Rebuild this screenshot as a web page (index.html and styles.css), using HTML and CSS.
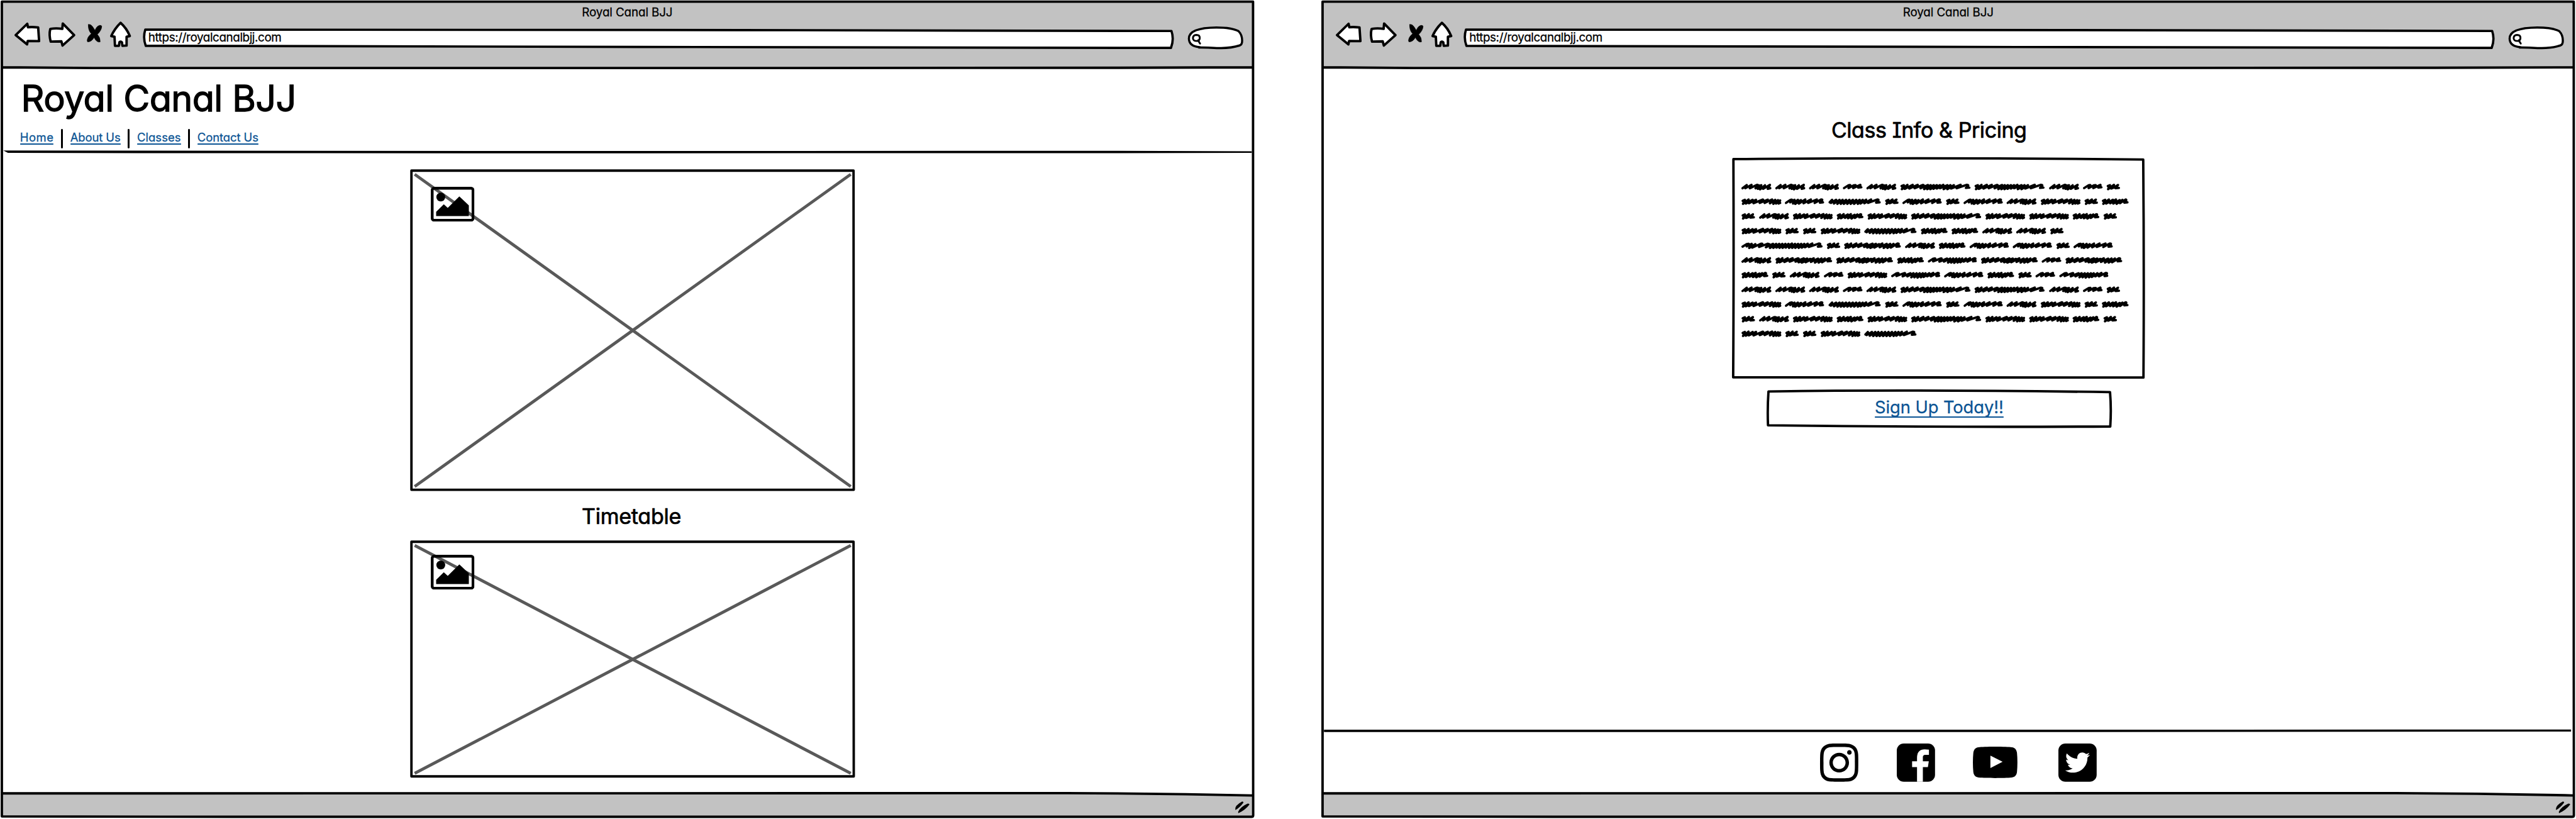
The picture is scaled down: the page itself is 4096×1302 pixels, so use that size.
FILE: index.html
```html
<!DOCTYPE html>
<html lang="en">
<head>
<meta charset="utf-8">
<title>Royal Canal BJJ</title>
<link rel="stylesheet" href="styles.css">
</head>
<body>
<svg class="defs" aria-hidden="true">
  <defs>
    <g id="frame">
      <path class="bar" d="M4 3.5H2700V145L2400 146 200 146.5 4 145ZM4 1709L2300 1708.5Q2500 1709 2700 1713.5V1759H4Z"/>
      <path class="ink" d="M4 3.5H2699.7L2699.7 1400 2700 1756Q2700 1759.5 2696 1759.5H500L4 1758.5 4 1500 4.2 800ZM4 145L200 146.5H1600L2400 146 2700 145M4 1709L2300 1708.5Q2500 1709 2700 1713.5"/>
      <path d="M2661.5 1744Q2660 1735 2676 1726.5Q2679 1726 2679 1729Q2671 1740 2661.5 1745ZM2667.5 1749Q2672 1738 2688 1731Q2692 1731 2692 1733Q2682 1746 2668 1751.5Z"/>
    </g>
    <g id="tools" class="tool">
      <path d="M34 75L59 50.5 60.5 58Q71 57 82.5 58.5L84.5 88 60 87.5 58.5 95Z"/>
      <path d="M109.5 61.5Q121 59.5 134.5 61.5L135.5 50 160 75 135 97.5 132.5 88.5 109.5 89Q105.500 74 108.500 62Z"/>
      <path class="solid" d="M190.500 52Q196 51 200 57L205 65Q208 56 215 54 219 53.500 219.500 56 219 65 210 73.500 217 81 216 89.500 209 92 203 80 197 90 189 89.500 187 87 189.500 81 192 76 197 72 190 65 190.500 52Z"/>
      <path d="M260 48.500Q273 60 280 77L273 78.500 273 97.500 264 98 263 90.500Q259.500 88 257.500 90.500L256.500 98 248 98 247 78.500 240 77Q247 61 260 48.500Z"/>
    </g>
    <symbol id="photo" viewBox="0 0 94 75">
      <rect class="photo-edge" x="3" y="3" width="88" height="69" rx="4"/>
      <circle cx="21.500" cy="22" r="9.500"/>
      <path d="M11.500 54L28 37.500 36.500 45.500 61.500 20.500 82 40V63H11.500Z"/>
    </symbol>
    <path id="a" d="M7 62L34 41 25 62 65 40 54 62 98 41Q110 38 104 46L91 62Q100 54 116 44L106 66 128 42 120 69 152 43 140 66 184 40 170 66 186 62"/>
    <path id="b" d="M7 61L36 43Q52 38 46 46L36 61 70 43 82 42 66 61 112 40Q116 44 106 52L98 58 119 56"/>
    <path id="c" d="M8 48L22 42 10 68 46 40 28 66 80 40 58 64 112 40 92 62 146 41Q156 40 144 52L130 62 178 41 154 68 196 42 174 68 216 42 194 68 236 42 214 66 256 42 236 64 278 40 256 62 304 42 280 68 324 42 304 68 346 42 328 64 390 40 364 62 430 40Q446 40 434 52L424 60 446 58"/>
    <path id="d" d="M8 48L22 42 10 68 48 40 30 64 50 56 74 41 58 62 80 60"/>
    <path id="e" d="M8 48L22 42 10 68 46 40 28 66 72 42 48 64 94 42 78 64 138 40Q144 42 134 50L118 62 170 41 150 62 198 40 184 64 218 42 206 68 236 44 224 66 250 46 240 66 250 62"/>
    <path id="f" d="M7 62L34 43Q50 38 46 46L34 58 62 42 52 66 84 42 66 68 104 44 90 66 132 40 120 64 168 40 150 62 206 40 192 62 234 40Q248 40 236 50L226 60 246 58"/>
    <path id="g" d="M8 58L24 42 16 62 50 42 36 66 72 42 58 68 92 42 80 68 114 42 100 68 136 42 122 68 158 42 144 68 180 42 166 68 202 42 190 68 222 42 208 66 244 41 232 64 276 40 256 62 316 40Q330 40 320 50L308 60 331 58"/>
    <path id="h" d="M8 48L22 42 10 68 46 40 28 66 72 42 54 64 92 40 74 66 116 44 96 68 134 42 118 64 154 40Q164 40 152 54L146 60 166 58"/>
    <path id="i" d="M8 48L22 42 10 68 46 40 28 66 80 40 58 64 112 40 92 62 146 41Q156 40 144 52L130 62 184 41 150 66 206 42 170 68 226 44 196 66 248 40 230 64 276 42 256 68 298 42 280 68 320 42 302 66 346 40Q360 40 348 52L338 60 360 58"/>
    <path id="j" d="M7 60L34 43Q52 38 46 46L34 60 82 42Q94 38 86 48L74 62 124 42 104 62 144 42 130 68 164 42 150 68 184 42 170 70 204 42 192 68 222 42 210 66 246 42 232 62 272 40 256 62 300 40Q314 40 302 52L292 60 309 58"/>
    <path id="k" d="M7 60L34 43Q52 38 46 46L34 58 66 42 50 68 90 44 70 66 126 41Q140 38 132 48L114 62 170 41 180 44 158 64 204 42 184 68 224 42 206 68 244 42 226 66 264 42 246 68 284 42 266 68 304 42 286 66 326 40 308 68 346 42 328 68 366 42 348 68 386 42 370 68 406 42 390 66 428 41 410 64 458 40 436 62 500 40Q516 40 504 52L494 60 517 58"/>
    <g id="line1"><use href="#a"/><use href="#a" x="219"/><use href="#a" x="437"/><use href="#b" x="656"/><use href="#a" x="808"/><use href="#c" x="1027"/><use href="#c" x="1506"/><use href="#a" x="1989"/><use href="#b" x="2208"/><use href="#d" x="2360"/></g>
    <g id="line2"><use href="#e"/><use href="#f" x="281"/><use href="#g" x="562"/><use href="#d" x="928"/><use href="#f" x="1041"/><use href="#d" x="1322"/><use href="#f" x="1436"/><use href="#a" x="1714"/><use href="#e" x="1934"/><use href="#d" x="2217"/><use href="#h" x="2329"/></g>
    <g id="line3"><use href="#d"/><use href="#a" x="114"/><use href="#e" x="332"/><use href="#h" x="615"/><use href="#e" x="814"/><use href="#c" x="1096"/><use href="#e" x="1576"/><use href="#e" x="1859"/><use href="#h" x="2140"/><use href="#d" x="2340"/></g>
    <g id="line4"><use href="#e"/><use href="#d" x="283"/><use href="#d" x="397"/><use href="#e" x="511"/><use href="#g" x="793"/></g>
  </defs>
</svg>

<section class="window">
  <svg class="frame" viewBox="0 0 2703 1764" aria-hidden="true"><use href="#frame"/></svg>
  <header class="chrome">
    <div class="caption"><span class="t-caption">Royal Canal BJJ</span></div>
    <div class="toolbar">
      <svg class="tools" viewBox="26 40 270 66" aria-hidden="true"><use href="#tools"/></svg>
      <div class="address">
        <svg class="outline" viewBox="306 58 2226 50" aria-hidden="true"><path class="field" d="M312.500 63.500L1600 64.500 2524 66.500Q2530 84 2523 103L1500 101 313.500 98.500Q307 81 312.500 63.500Z"/></svg>
        <span class="t-url">https://royalcanalbjj.com</span>
      </div>
      <svg class="search" viewBox="612 168 364 156" aria-hidden="true"><path class="pill" d="M690 306C650 302 622 285 622 250C622 205 680 180 800 179C870 179 920 190 943 203C960 220 966 245 966 265C966 285 958 293 950 295C910 308 870 312 830 312C780 312 740 307 690 308Z"/><path class="lens" d="M670 227C657 228 648 236 648 248C648 260 658 266 670 266C684 266 692 258 692 246C692 234 684 227 670 227ZM681 262L694 283"/></svg>
    </div>
  </header>
  <div class="masthead">
    <h1><span class="t-h1">Royal Canal BJJ</span></h1>
    <nav class="nav">
      <a class="link t-home">Home</a><i class="rule"></i><a class="link t-about">About Us</a><i class="rule"></i><a class="link t-classes">Classes</a><i class="rule"></i><a class="link t-contact">Contact Us</a>
    </nav>
    <svg class="divider" viewBox="0 0 2703 8" aria-hidden="true"><path d="M4 .5L1400 1.500 2400 1 2700 2.200V5.500L2400 6 1000 6.500 300 6 14 5.500Z"/></svg>
  </div>
  <main class="gallery">
    <div class="picture picture-tall">
      <svg class="outline" viewBox="0 0 959 694" aria-hidden="true"><path class="cross" d="M10 11L949.500 683.500M949.500 11L10 683.500"/><path class="ink" d="M3 3L955.500 3 956 690.500H3Z"/></svg>
      <svg class="photo" aria-hidden="true"><use href="#photo"/></svg>
    </div>
    <h2><span class="t-time">Timetable</span></h2>
    <div class="picture picture-short">
      <svg class="outline" viewBox="0 0 959 512" aria-hidden="true"><path class="cross" d="M10 11L949.500 502M949.500 11L10 502"/><path class="ink" d="M3 3L955.500 3 956 508.500H3Z"/></svg>
      <svg class="photo" aria-hidden="true"><use href="#photo"/></svg>
    </div>
  </main>
</section>

<section class="window">
  <svg class="frame" viewBox="0 0 2703 1764" aria-hidden="true"><use href="#frame"/></svg>
  <header class="chrome">
    <div class="caption"><span class="t-caption">Royal Canal BJJ</span></div>
    <div class="toolbar">
      <svg class="tools" viewBox="26 40 270 66" aria-hidden="true"><use href="#tools"/></svg>
      <div class="address">
        <svg class="outline" viewBox="306 58 2226 50" aria-hidden="true"><path class="field" d="M312.500 63.500L1600 64.500 2524 66.500Q2530 84 2523 103L1500 101 313.500 98.500Q307 81 312.500 63.500Z"/></svg>
        <span class="t-url">https://royalcanalbjj.com</span>
      </div>
      <svg class="search" viewBox="612 168 364 156" aria-hidden="true"><path class="pill" d="M690 306C650 302 622 285 622 250C622 205 680 180 800 179C870 179 920 190 943 203C960 220 966 245 966 265C966 285 958 293 950 295C910 308 870 312 830 312C780 312 740 307 690 308Z"/><path class="lens" d="M670 227C657 228 648 236 648 248C648 260 658 266 670 266C684 266 692 258 692 246C692 234 684 227 670 227ZM681 262L694 283"/></svg>
    </div>
  </header>
  <main class="pricing">
    <h2 class="pricing-title"><span class="t-class">Class <b class="serif-i">I</b>nfo &amp; Pricing</span></h2>
    <div class="copy">
      <svg class="outline" viewBox="0 0 890 479" aria-hidden="true"><path class="ink" d="M3 4Q450 0 886 5Q888 240 886.500 474.500Q450 476 2.500 474Q4 240 3 4Z"/></svg>
      <svg class="scribble" viewBox="0 0 2510 1030" aria-hidden="true">
        <use href="#line1"/><use href="#line2" y="94.900"/><use href="#line3" y="189.800"/>
        <g transform="translate(0 284.700)"><use href="#line4"/><use href="#h" x="1159"/><use href="#h" x="1357"/><use href="#a" x="1557"/><use href="#a" x="1776"/><use href="#d" x="1995"/></g>
        <g transform="translate(0 379.600)"><use href="#k"/><use href="#d" x="551"/><use href="#i" x="663"/><use href="#a" x="1058"/><use href="#h" x="1275"/><use href="#f" x="1475"/><use href="#f" x="1754"/><use href="#d" x="2035"/><use href="#f" x="2147"/></g>
        <g transform="translate(0 474.500)"><use href="#a"/><use href="#i" x="219"/><use href="#i" x="612"/><use href="#h" x="1006"/><use href="#j" x="1205"/><use href="#i" x="1548"/><use href="#b" x="1941"/><use href="#i" x="2094"/></g>
        <g transform="translate(0 569.400)"><use href="#h"/><use href="#d" x="198"/><use href="#a" x="312"/><use href="#b" x="533"/><use href="#e" x="685"/><use href="#j" x="968"/><use href="#f" x="1310"/><use href="#h" x="1589"/><use href="#d" x="1789"/><use href="#b" x="1901"/><use href="#j" x="2055"/></g>
        <use href="#line1" y="664.300"/><use href="#line2" y="759.200"/><use href="#line3" y="854.100"/><use href="#line4" y="949"/>
      </svg>
    </div>
    <div class="signup">
      <svg class="outline" viewBox="0 0 744 84" aria-hidden="true"><path class="ink" d="M4 4.500Q330 0 740 6Q743 42 740.500 80Q370 82 3 77.500Q1.500 42 4 4.500Z"/></svg>
      <a class="link link-big">Sign Up Today!!</a>
    </div>
  </main>
  <footer class="social">
    <svg class="social-rule" viewBox="0 0 2703 8" aria-hidden="true"><path d="M4 1.500H1400L2697 1V5.500L1500 6.500H4Z"/></svg>
    <div class="icons">
      <svg class="icon" viewBox="0 32 448 448" aria-label="Instagram"><path d="M224.100 141c-63.600 0-114.900 51.300-114.900 114.900s51.300 114.900 114.900 114.900S339 319.500 339 255.900 287.700 141 224.100 141zm0 189.600c-41.100 0-74.700-33.500-74.700-74.700s33.500-74.700 74.700-74.700 74.700 33.500 74.700 74.700-33.600 74.700-74.700 74.700zm146.400-194.300c0 14.900-12 26.800-26.800 26.800-14.900 0-26.800-12-26.800-26.800s12-26.800 26.800-26.800 26.800 12 26.800 26.800zm76.100 27.200c-1.700-35.900-9.900-67.700-36.200-93.900-26.200-26.200-58-34.400-93.900-36.200-37-2.100-147.900-2.100-184.900 0-35.800 1.700-67.600 9.900-93.900 36.100s-34.400 58-36.200 93.900c-2.100 37-2.100 147.900 0 184.900 1.700 35.900 9.900 67.700 36.200 93.900s58 34.400 93.900 36.200c37 2.100 147.900 2.100 184.900 0 35.900-1.700 67.700-9.900 93.900-36.200 26.200-26.200 34.400-58 36.200-93.900 2.100-37 2.100-147.800 0-184.800zM398.800 388c-7.800 19.600-22.900 34.700-42.600 42.600-29.500 11.700-99.500 9-132.100 9s-102.700 2.600-132.100-9c-19.600-7.800-34.700-22.900-42.600-42.600-11.700-29.500-9-99.500-9-132.100s-2.600-102.700 9-132.100c7.800-19.600 22.900-34.700 42.600-42.600 29.500-11.700 99.500-9 132.100-9s102.700-2.600 132.100 9c19.600 7.800 34.700 22.900 42.600 42.600 11.700 29.500 9 99.500 9 132.100s2.700 102.700-9 132.100z"/></svg>
      <svg class="icon" viewBox="0 0 82.400 82.400" aria-label="Facebook"><rect width="82.400" height="82.400" rx="15"/><path class="cut" d="M43.600 82.400V50.700H33V38.300H43.600V31C43.600 18 50 12.700 60 12.700Q65 12.700 69.300 13.300V24.500H62.500C57 24.500 56.200 27 56.200 30V38.300H69L67 50.700H56.200V82.400Z"/></svg>
      <svg class="icon icon-wide" viewBox="0 0 96 67.700" aria-label="YouTube"><path d="M48 0C65 0 78 .5 84 1.200 91 2 94 6.500 95 13 96.300 26 96.300 42 95 55 94 61.500 91 65.500 84 66.500 66 68.100 30 68.100 12 66.500 5 65.500 2 61.500 1 55-.3 42-.3 26 1 13 2 6.500 5 2 12 1.200 18 .5 31 0 48 0Z"/><path class="cut" d="M37.800 19.300L64 32.600 37.800 46Z"/></svg>
      <svg class="icon icon-last" viewBox="0 32 448 448" aria-label="Twitter"><rect y="32" width="448" height="448" rx="82"/><path class="cut" transform="translate(20.500 22) scale(.91)" d="M351.100 190.800c.2 2.800.2 5.700.2 8.500 0 86.700-66 186.600-186.600 186.600-37.200 0-71.700-10.800-100.700-29.400 5.300.6 10.400.8 15.800.8 30.700 0 58.900-10.400 81.400-28-28.800-.6-53-19.500-61.300-45.500 10.100 1.500 19.200 1.500 29.600-1.200-30-6.100-52.500-32.500-52.500-64.400v-.8c8.700 4.900 18.900 7.900 29.600 8.300a65.447 65.447 0 0 1-29.200-54.600c0-12.200 3.200-23.400 8.900-33.100 32.300 39.800 80.800 65.800 135.200 68.600-9.300-44.500 24-80.600 64-80.600 18.900 0 35.900 7.900 47.900 20.700 14.800-2.800 29-8.300 41.600-15.800-4.900 15.200-15.200 28-28.800 36.100 13.200-1.400 26-5.100 37.800-10.200-8.900 13.100-20.100 24.700-32.900 34z"/></svg>
    </div>
  </footer>
</section>
</body>
</html>
```
FILE: styles.css
```css
/* 1rem = ten units of the 5550-wide drawing, scaled to the 4096 window */
html { font-size: 7.38018px; }
* { box-sizing: border-box; }
body {
  margin: 0;
  display: flex;
  gap: 14.3rem;
  width: 555rem;
  height: 176.4rem;
  overflow: hidden;
  background: #fff;
  color: #000;
  font-family: Inter, "Open Sans", sans-serif;
  font-weight: 400;
  font-feature-settings: "cv11" 1;
  -webkit-text-stroke: .3px currentColor;
}
.defs { position: absolute; width: 0; height: 0; }
svg { display: block; overflow: visible; }
h1, h2 { margin: 0; font-weight: inherit; -webkit-text-stroke: .022em currentColor; }
.t-caption, .t-url, .t-h1, .t-time, .t-class, .link { white-space: nowrap; }
.t-caption { letter-spacing: -.01rem; }
.t-url { letter-spacing: -.052rem; }
.t-h1 { letter-spacing: -.08rem; }
.t-home { letter-spacing: .07rem; }
.t-about { letter-spacing: -.012rem; }
.t-classes { letter-spacing: .01rem; }
.t-contact { letter-spacing: -.01rem; }
.t-time { letter-spacing: -.03rem; }
.t-class { letter-spacing: -.055rem; }

.window {
  position: relative;
  z-index: 0;
  flex: none;
  width: 270.3rem;
  height: 176.4rem;
  display: flex;
  flex-direction: column;
}
.frame { position: absolute; inset: 0; width: 100%; height: 100%; z-index: -1; }
.ink { fill: none; stroke: #000; stroke-width: 5.2; stroke-linejoin: round; }
.bar { fill: #c2c2c2; }
.outline { position: absolute; inset: 0; width: 100%; height: 100%; z-index: -1; }

.chrome { height: 14.6rem; padding-top: 1.25rem; }
.caption { text-align: center; font-size: 2.54rem; line-height: 3rem; height: 2.75rem; }
.toolbar { display: flex; align-items: flex-start; padding-left: 2.6rem; }
.tools { width: 27rem; height: 6.6rem; margin-right: 1rem; }
.tool path { fill: #fff; stroke: #000; stroke-width: 5.2; stroke-linejoin: round; }
.tool .solid { fill: #000; stroke-width: 1; }
.address {
  position: relative;
  width: 222.6rem;
  height: 5rem;
  margin-top: 1.8rem;
  padding: .84rem 0 0 1.35rem;
  font-size: 2.55rem;
  line-height: 3rem;
}
.field { fill: #fff; stroke: #000; stroke-width: 5; stroke-linejoin: round; }
.search { width: 12.133rem; height: 5.2rem; margin: 1.6rem 0 0 2.6rem; }
.pill { fill: #fff; stroke: #000; stroke-width: 14; }
.lens { fill: none; stroke: #000; stroke-width: 12; stroke-linecap: round; }

.masthead { height: 18.6rem; padding-top: 2.06rem; display: flex; flex-direction: column; }
h1 { padding-left: 4.55rem; font-size: 7.8rem; line-height: 9rem; height: 11.1rem; }
.nav { display: flex; align-items: flex-start; height: 4.4rem; padding-left: 4.3rem; font-size: 2.5rem; line-height: 3rem; }
.link { position: relative; margin-top: .35rem; color: #0b5494; -webkit-text-stroke: .3px #0b5494; }
.link::after { content: ""; position: absolute; left: 0; right: 0; top: 2.83rem; height: .27rem; border-radius: .1rem; background: #0b5494; }
.rule { width: .36rem; height: 4.2rem; margin: 0 1.6rem; border-radius: .2rem; background: #000; }
.divider { flex: none; width: 270.3rem; height: .8rem; margin-top: .2rem; }

.gallery { width: 95.9rem; margin: 3.3rem 0 0 88.3rem; }
.picture { position: relative; padding: 3.7rem 0 0 4.5rem; }
.picture-tall { height: 69.4rem; }
.picture-short { height: 51.2rem; padding-top: 3.1rem; }
.photo { width: 9.4rem; height: 7.5rem; }
.photo-edge { fill: none; stroke: #000; stroke-width: 6; }
.cross { fill: none; stroke: #595959; stroke-width: 6.5; }
h2 { text-align: center; font-size: 4.6rem; line-height: 6rem; }
.gallery h2 { height: 10.5rem; padding: 2.43rem .4rem 0 0; }

.pricing { flex: 1; display: flex; flex-direction: column; padding: 10.53rem 0 0 88.6rem; width: 177.6rem; }
.pricing-title { height: 8.8rem; padding-right: 4.2rem; }
.serif-i { font-weight: inherit; font-feature-settings: "cv08" 1; }
.copy { position: relative; height: 47.9rem; padding: 4.5rem 0 0 2.03rem; }
.scribble { width: 83.67rem; height: 34.33rem; fill: none; stroke: #000; stroke-width: 15; stroke-linecap: round; stroke-linejoin: round; }
.signup { position: relative; width: 74.4rem; height: 8.4rem; margin: 2.1rem 0 0 7.4rem; padding-top: 1.9rem; text-align: center; font-size: 3.7rem; line-height: 4rem; }
.link-big { display: inline-block; margin-top: 0; letter-spacing: -.01rem; }
.link-big::after { top: 3.88rem; }

.social { height: 19.3rem; }
.social-rule { width: 270.3rem; height: .8rem; }
.icons { display: flex; align-items: center; gap: 8.17rem; padding: 2.24rem 0 0 107.6rem; }
.icon { width: 8.24rem; height: 8.24rem; }
.icon-wide { width: 9.6rem; height: 6.77rem; }
.icon-last { margin-left: .7rem; }
.cut { fill: #fff; }
```
